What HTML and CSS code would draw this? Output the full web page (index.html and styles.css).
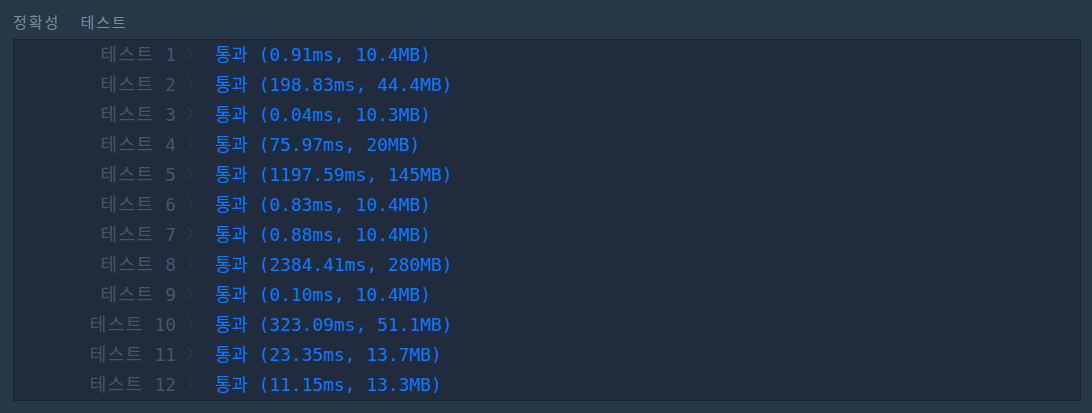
FILE: index.html
```html
<!DOCTYPE html>
<html lang="ko">
<head>
    <meta charset="UTF-8">
    <title>채점 결과</title>
    <link rel="stylesheet" href="styles.css">
</head>
<body>
    <div class="result-panel">
        <div class="result-tabs">
            <span class="tab">정확성</span>
            <span class="tab">테스트</span>
        </div>

        <div class="console">
            <div class="row"><span class="label"><span class="ko">테스트</span> 1</span><svg class="chevron" viewBox="0 0 7 13"><polyline points="0.5,0.5 6,6.5 0.5,12.5"/></svg><span class="pass"><span class="ko">통과</span> (0.91ms, 10.4MB)</span></div>
            <div class="row"><span class="label"><span class="ko">테스트</span> 2</span><svg class="chevron" viewBox="0 0 7 13"><polyline points="0.5,0.5 6,6.5 0.5,12.5"/></svg><span class="pass"><span class="ko">통과</span> (198.83ms, 44.4MB)</span></div>
            <div class="row"><span class="label"><span class="ko">테스트</span> 3</span><svg class="chevron" viewBox="0 0 7 13"><polyline points="0.5,0.5 6,6.5 0.5,12.5"/></svg><span class="pass"><span class="ko">통과</span> (0.04ms, 10.3MB)</span></div>
            <div class="row"><span class="label"><span class="ko">테스트</span> 4</span><svg class="chevron" viewBox="0 0 7 13"><polyline points="0.5,0.5 6,6.5 0.5,12.5"/></svg><span class="pass"><span class="ko">통과</span> (75.97ms, 20MB)</span></div>
            <div class="row"><span class="label"><span class="ko">테스트</span> 5</span><svg class="chevron" viewBox="0 0 7 13"><polyline points="0.5,0.5 6,6.5 0.5,12.5"/></svg><span class="pass"><span class="ko">통과</span> (1197.59ms, 145MB)</span></div>
            <div class="row"><span class="label"><span class="ko">테스트</span> 6</span><svg class="chevron" viewBox="0 0 7 13"><polyline points="0.5,0.5 6,6.5 0.5,12.5"/></svg><span class="pass"><span class="ko">통과</span> (0.83ms, 10.4MB)</span></div>
            <div class="row"><span class="label"><span class="ko">테스트</span> 7</span><svg class="chevron" viewBox="0 0 7 13"><polyline points="0.5,0.5 6,6.5 0.5,12.5"/></svg><span class="pass"><span class="ko">통과</span> (0.88ms, 10.4MB)</span></div>
            <div class="row"><span class="label"><span class="ko">테스트</span> 8</span><svg class="chevron" viewBox="0 0 7 13"><polyline points="0.5,0.5 6,6.5 0.5,12.5"/></svg><span class="pass"><span class="ko">통과</span> (2384.41ms, 280MB)</span></div>
            <div class="row"><span class="label"><span class="ko">테스트</span> 9</span><svg class="chevron" viewBox="0 0 7 13"><polyline points="0.5,0.5 6,6.5 0.5,12.5"/></svg><span class="pass"><span class="ko">통과</span> (0.10ms, 10.4MB)</span></div>
            <div class="row"><span class="label"><span class="ko">테스트</span> 10</span><svg class="chevron" viewBox="0 0 7 13"><polyline points="0.5,0.5 6,6.5 0.5,12.5"/></svg><span class="pass"><span class="ko">통과</span> (323.09ms, 51.1MB)</span></div>
            <div class="row"><span class="label"><span class="ko">테스트</span> 11</span><svg class="chevron" viewBox="0 0 7 13"><polyline points="0.5,0.5 6,6.5 0.5,12.5"/></svg><span class="pass"><span class="ko">통과</span> (23.35ms, 13.7MB)</span></div>
            <div class="row"><span class="label"><span class="ko">테스트</span> 12</span><svg class="chevron" viewBox="0 0 7 13"><polyline points="0.5,0.5 6,6.5 0.5,12.5"/></svg><span class="pass"><span class="ko">통과</span> (11.15ms, 13.3MB)</span></div>
        </div>
    </div>
</body>
</html>
```

FILE: styles.css
```css
* {
    margin: 0;
    padding: 0;
    box-sizing: border-box;
}

body {
    background: #263747;
    font-family: 'DejaVu Sans Mono', 'Noto Sans CJK KR', monospace;
}

.result-panel {
    padding: 11px 12px 0 13px;
}

.result-tabs {
    display: flex;
    gap: 20px;
    height: 28px;
    font-family: 'Noto Sans CJK KR', sans-serif;
    font-size: 15px;
    line-height: 21px;
    letter-spacing: 2px;
    color: #7d8c9a;
}

.console {
    width: 1068px;
    background: #202b3d;
    border: 1px solid #172131;
}

.row {
    display: flex;
    align-items: center;
    height: 30px;
    padding-bottom: 4px;
    font-size: 17.9px;
    white-space: pre;
}

.ko {
    letter-spacing: 1.5px;
}

.label {
    width: 162px;
    text-align: right;
    color: #46566a;
}

.chevron {
    width: 7px;
    height: 13px;
    margin: 0 21px 0 11px;
    fill: none;
    stroke: #324155;
    stroke-width: 1;
}

.pass {
    color: #0f78ff;
}

.pass .ko {
    letter-spacing: 0;
}
```
